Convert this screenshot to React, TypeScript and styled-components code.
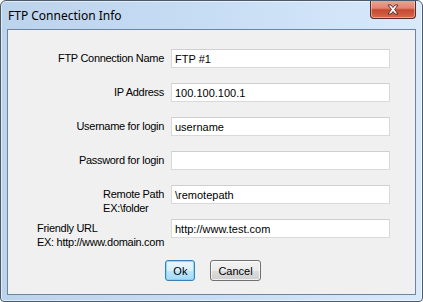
import { Fragment } from 'react';
import styled, { createGlobalStyle } from 'styled-components';

interface IField {
  label: string[];
  value: string;
}

const FIELDS: IField[] = [
  { label: ['FTP Connection Name'], value: 'FTP #1' },
  { label: ['IP Address'], value: '100.100.100.1' },
  { label: ['Username for login'], value: 'username' },
  { label: ['Password for login'], value: '' },
  { label: ['Remote Path', 'EX:\\folder'], value: '\\remotepath' },
  { label: ['Friendly URL', 'EX: http://www.domain.com'], value: 'http://www.test.com' },
];

const GlobalStyle = createGlobalStyle`
  html, body {
    margin: 0;
    padding: 0;
    background: #ffffff;
  }
`;

const Window = styled.div`
  box-sizing: border-box;
  width: 423px;
  height: 302px;
  display: flex;
  flex-direction: column;
  border: 1px solid #4a5a6c;
  border-radius: 6px 6px 4px 4px;
  background: linear-gradient(90deg, #bcd3ec 0%, #c6dcf3 45%, #d8e9fb 100%);
  box-shadow: inset 0 0 0 1px rgba(255, 255, 255, 0.55);
  overflow: hidden;
`;

const TitleBar = styled.div`
  height: 28px;
  flex: none;
  display: flex;
  align-items: flex-start;
  justify-content: space-between;
  padding: 0 6px 0 7px;
`;

const Title = styled.span`
  font-family: 'Noto Sans', 'Open Sans', sans-serif;
  font-size: 12px;
  color: #000;
  margin-top: 6px;
`;

const CloseButton = styled.div`
  box-sizing: border-box;
  width: 46px;
  height: 19px;
  margin-top: -1px;
  display: flex;
  align-items: center;
  justify-content: center;
  border: 1px solid #5b2a24;
  border-top: none;
  border-radius: 0 0 4px 4px;
  background: linear-gradient(180deg, #e9a999 0%, #dc8770 45%, #c7482f 55%, #d56a4d 100%);
  box-shadow: inset 0 0 0 1px rgba(255, 220, 210, 0.5);
`;

const Client = styled.div`
  flex: 1;
  margin: 0 6px 6px 6px;
  border: 1px solid #6d84a0;
  background: #f0f0f0;
  display: flex;
  flex-direction: column;
  font-family: 'Liberation Sans', Arial, sans-serif;
  font-size: 11px;
  color: #000;
`;

const Form = styled.div`
  display: grid;
  grid-template-columns: 156px 219px;
  grid-auto-rows: 19px;
  column-gap: 7px;
  row-gap: 15px;
  padding-top: 19px;
`;

const Label = styled.div`
  justify-self: end;
  text-align: left;
  line-height: 14px;
  padding-top: 2px;
  white-space: nowrap;
  letter-spacing: -0.3px;
`;

const Field = styled.input`
  box-sizing: border-box;
  width: 100%;
  height: 19px;
  margin: 0;
  padding: 0 3px;
  border: 1px solid #d9d9d9;
  border-top-color: #cfcfcf;
  background: #ffffff;
  font-family: 'Liberation Sans', Arial, sans-serif;
  font-size: 11px;
  color: #000;
  outline: none;
`;

const ButtonRow = styled.div`
  display: flex;
  justify-content: center;
  gap: 15px;
  margin-top: 22px;
  padding-left: 3px;
`;

const Button = styled.button<{ $default?: boolean }>`
  box-sizing: border-box;
  height: 21px;
  padding: 0 7px;
  border-radius: 3px;
  border: 1px solid ${(p) => (p.$default ? '#3c7fb1' : '#707070')};
  background: ${(p) =>
    p.$default
      ? 'linear-gradient(180deg, #eaf6fd 0%, #d9f0fc 50%, #bee6fd 51%, #a7d9f5 100%)'
      : 'linear-gradient(180deg, #f2f2f2 0%, #ebebeb 50%, #dddddd 51%, #cfcfcf 100%)'};
  box-shadow: inset 0 0 0 1px ${(p) => (p.$default ? 'rgba(120, 210, 245, 0.8)' : 'rgba(255, 255, 255, 0.7)')};
  font-family: 'Liberation Sans', Arial, sans-serif;
  font-size: 11px;
  color: #000;
`;

const CloseIcon = () => (
  <svg width="14" height="11" viewBox="0 0 14 11">
    <path
      d="M2 1 L5 1 L7 3.5 L9 1 L12 1 L8.6 5.5 L12 10 L9 10 L7 7.5 L5 10 L2 10 L5.4 5.5 Z"
      fill="#ffffff"
      stroke="#4b2520"
      strokeWidth="0.9"
      strokeLinejoin="round"
    />
  </svg>
);

const App = () => {
  return (
    <>
      <GlobalStyle />
      <Window>
        <TitleBar>
          <Title>FTP Connection Info</Title>
          <CloseButton>
            <CloseIcon />
          </CloseButton>
        </TitleBar>
        <Client>
          <Form>
            {FIELDS.map((f) => (
              <Fragment key={f.label[0]}>
                <Label>
                  {f.label.map((line, i) => (
                    <div key={i}>{line}</div>
                  ))}
                </Label>
                <Field defaultValue={f.value} readOnly />
              </Fragment>
            ))}
          </Form>
          <ButtonRow>
            <Button $default>Ok</Button>
            <Button>Cancel</Button>
          </ButtonRow>
        </Client>
      </Window>
    </>
  );
};

export default App;
